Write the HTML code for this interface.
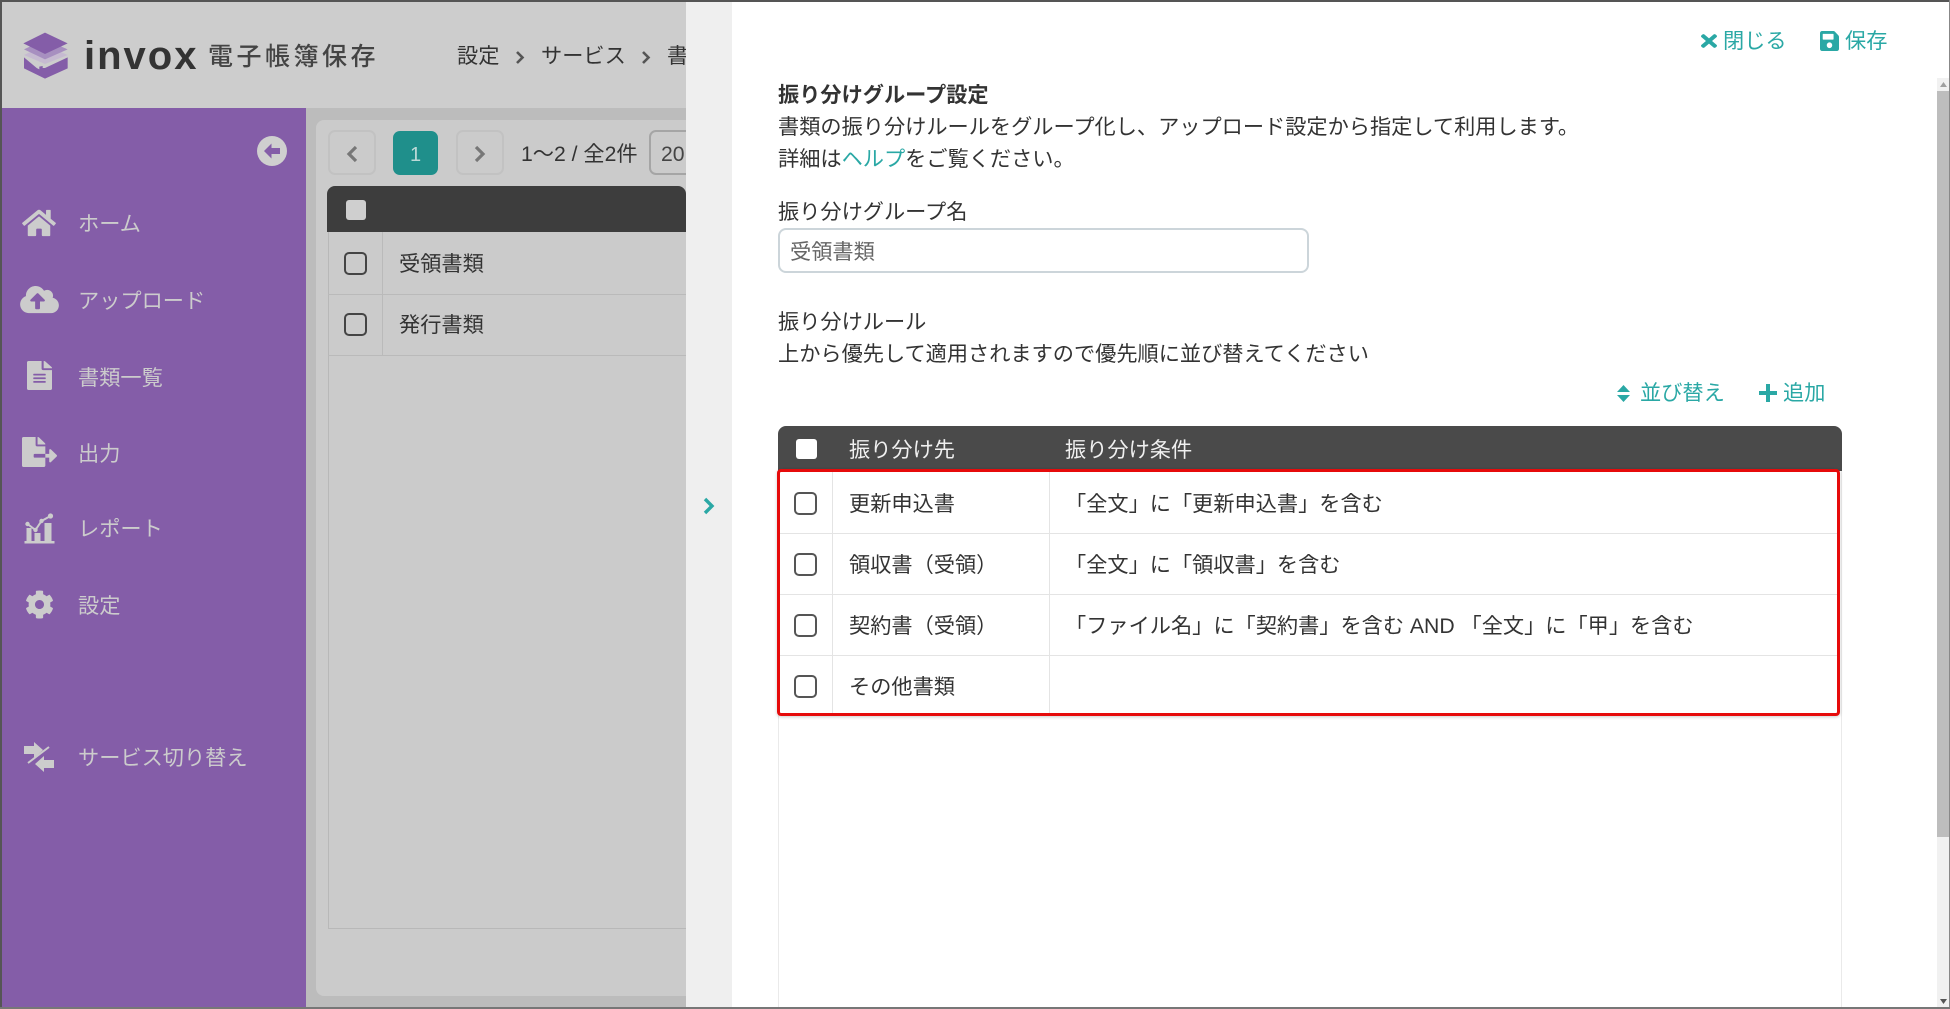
<!DOCTYPE html>
<html lang="ja"><head><meta charset="utf-8"><title>invox</title>
<style>
html,body{margin:0;padding:0;width:1950px;height:1009px;overflow:hidden;background:#fff}
body{position:relative;font-family:"Liberation Sans","Noto Sans CJK JP",sans-serif;font-size:21.2px;color:#333;filter:blur(.3px)}
div,span,svg{position:absolute;display:block}
span.i{position:static;display:inline}
.t{white-space:nowrap;line-height:30px;height:30px;margin-top:1px}
.n{color:#ccc;left:78px;margin-top:2px}
.c{color:#2aa8a5}
.cb{box-sizing:border-box;border:2px solid #555;border-radius:5px;width:23px;height:23px}
.l{background:#e4e4e4}
</style></head><body>
<!-- dim left -->
<div style="left:0;top:0;width:686px;height:108px;background:#cdcdcd"></div>
<div style="left:306px;top:108px;width:380px;height:901px;background:#bcbcbc"></div>
<div style="left:316px;top:120px;width:370px;height:876px;background:#cbcbcb;border-radius:8px 0 0 8px"></div>
<div style="left:0;top:108px;width:306px;height:901px;background:#845da8"></div>

<!-- logo -->
<svg style="left:0;top:0" width="240" height="120" viewBox="0 0 720 360">
<polygon points="72,172 72,205 135,236 203,205 203,172 135,204 128,204 128,198 118,200 118,208 110,204 72,172" fill="#845da8"/>
<polygon points="135,135 203,165 135,192 72,165" fill="#c6bad1"/>
<polygon points="135,118 203,148 135,178 72,148" fill="#a78fc0"/>
<polygon points="135,98 203,130 135,162 70,130" fill="#845da8"/>
</svg>
<div class="t" style="left:84px;top:32px;height:46px;font:bold 40px/46px 'Liberation Sans',sans-serif;letter-spacing:2px;color:#333">invox</div>
<div class="t" style="left:208px;top:41px;font-size:25px;letter-spacing:3.5px;font-weight:500;color:#444">電子帳簿保存</div>
<div class="t" style="left:457px;top:41px;color:#333">設定</div>
<svg style="left:515px;top:50px" width="10" height="15" viewBox="0 0 10 15"><path d="M2 2l5.500 5.500L2 13" fill="none" stroke="#555" stroke-width="2.600"/></svg>
<div class="t" style="left:541px;top:41px;color:#333">サービス</div>
<svg style="left:641px;top:50px" width="10" height="15" viewBox="0 0 10 15"><path d="M2 2l5.500 5.500L2 13" fill="none" stroke="#555" stroke-width="2.600"/></svg>
<div style="left:660px;top:40px;width:26px;height:34px;overflow:hidden"><div class="t" style="left:7px;top:1px;color:#333">書</div></div>

<!-- sidebar -->
<svg style="left:257px;top:136px" width="30" height="30" viewBox="0 0 30 30"><circle cx="15" cy="15" r="15" fill="#cfcfcf"/><path d="M14.500 7.500L7 15l7.500 7.500V18H23v-6h-8.500z" fill="#845da8"/></svg>

<svg style="left:22px;top:208px" width="34" height="30" viewBox="0 0 576 512" fill="#ccc"><path d="M280.37 148.26L96 300.11V464a16 16 0 0 0 16 16l112.06-.29a16 16 0 0 0 15.92-16V368a16 16 0 0 1 16-16h64a16 16 0 0 1 16 16v95.64a16 16 0 0 0 16 16.05L464 480a16 16 0 0 0 16-16V300L295.67 148.26a12.19 12.19 0 0 0-15.3 0zM571.6 251.47L488 182.56V44.05a12 12 0 0 0-12-12h-56a12 12 0 0 0-12 12v72.61L318.47 43a48 48 0 0 0-61 0L4.34 251.47a12 12 0 0 0-1.6 16.9l25.5 31A12 12 0 0 0 45.15 301l235.22-193.74a12.19 12.19 0 0 1 15.3 0L530.9 301a12 12 0 0 0 16.9-1.6l25.5-31a12 12 0 0 0-1.7-16.93z"/></svg>
<div class="t n" style="top:208px">ホーム</div>

<svg style="left:20px;top:284px" width="39" height="31" viewBox="0 0 640 512" fill="#ccc"><path d="M537.6 226.6c4.1-10.7 6.4-22.4 6.4-34.6 0-53-43-96-96-96-19.7 0-38.1 6-53.3 16.2C367 64.2 315.3 32 256 32c-88.4 0-160 71.6-160 160 0 2.7.1 5.4.2 8.1C40.2 219.8 0 273.2 0 336c0 79.5 64.5 144 144 144h368c70.7 0 128-57.3 128-128 0-61.9-44-113.6-102.4-125.4zM393.4 288H328v112c0 8.8-7.2 16-16 16h-48c-8.8 0-16-7.2-16-16V288h-65.4c-14.3 0-21.4-17.2-11.3-27.3l105.400-105.400c6.200-6.200 16.400-6.200 22.600 0l105.400 105.400c10.100 10.100 2.900 27.300-11.300 27.300z"/></svg>
<div class="t n" style="top:285px">アップロード</div>

<svg style="left:27px;top:361px" width="25" height="29" viewBox="0 0 384 512" preserveAspectRatio="none" fill="#ccc"><path d="M224 136V0H24C10.7 0 0 10.7 0 24v464c0 13.3 10.700 24 24 24h336c13.300 0 24-10.700 24-24V160H248c-13.200 0-24-10.800-24-24zm64 236c0 6.600-5.400 12-12 12H108c-6.600 0-12-5.400-12-12v-8c0-6.600 5.400-12 12-12h168c6.600 0 12 5.400 12 12v8zm0-64c0 6.600-5.400 12-12 12H108c-6.600 0-12-5.400-12-12v-8c0-6.600 5.400-12 12-12h168c6.600 0 12 5.400 12 12v8zm0-72v8c0 6.600-5.400 12-12 12H108c-6.600 0-12-5.400-12-12v-8c0-6.600 5.400-12 12-12h168c6.600 0 12 5.400 12 12zm96-114.100v6.100H256V0h6.100c6.400 0 12.500 2.500 17 7l97.900 98c4.500 4.500 7 10.600 7 16.900z"/></svg>
<div class="t n" style="top:362px">書類一覧</div>

<svg style="left:22px;top:437px" width="35" height="30" viewBox="0 0 576 512" preserveAspectRatio="none" fill="#ccc"><path d="M384 121.900c0-6.300-2.500-12.400-7-16.900L279.100 7c-4.500-4.500-10.600-7-17-7H256v128h128zM571 308l-95.700-96.400c-10.100-10.100-27.400-3-27.400 11.300V288h-64v64h64v65.200c0 14.300 17.300 21.400 27.400 11.300L571 332c6.600-6.600 6.600-17.400 0-24zm-379 28v-32c0-8.800 7.200-16 16-16h176V160H248c-13.200 0-24-10.800-24-24V0H24C10.700 0 0 10.700 0 24v464c0 13.300 10.700 24 24 24h336c13.300 0 24-10.700 24-24V352H208c-8.800 0-16-7.200-16-16z"/></svg>
<div class="t n" style="top:438px">出力</div>

<svg style="left:24px;top:513px" width="31" height="31" viewBox="0 0 30 31" fill="#ccc"><rect x="0" y="28" width="30" height="2.500"/><rect x="2" y="15" width="5" height="13"/><rect x="10" y="20" width="6" height="8"/><rect x="20" y="10" width="7" height="18"/><path d="M3 11l8 6 6-9 9-5" fill="none" stroke="#ccc" stroke-width="2"/><circle cx="3" cy="11" r="2.200"/><circle cx="11" cy="17" r="2.200"/><circle cx="17" cy="8" r="2.200"/><circle cx="26" cy="3" r="2.600"/></svg>
<div class="t n" style="top:513px">レポート</div>

<svg style="left:25px;top:590px" width="29" height="29" viewBox="0 0 512 512" fill="#ccc"><path d="M487.4 315.700l-42.600-24.600c4.300-23.200 4.300-47 0-70.200l42.600-24.600c4.900-2.800 7.100-8.600 5.500-14-11.100-35.600-30-67.800-54.700-94.600-3.800-4.100-10-5.100-14.800-2.300L380.800 110c-17.900-15.400-38.500-27.300-60.800-35.100V25.800c0-5.600-3.900-10.500-9.400-11.700-36.700-8.200-74.300-7.800-109.200 0-5.500 1.200-9.400 6.100-9.400 11.700V75c-22.200 7.900-42.800 19.800-60.800 35.100L88.700 85.500c-4.900-2.800-11-1.900-14.800 2.300-24.700 26.700-43.600 58.900-54.700 94.600-1.700 5.400.6 11.200 5.500 14L67.300 221c-4.300 23.200-4.300 47 0 70.200l-42.600 24.600c-4.900 2.800-7.100 8.600-5.500 14 11.100 35.600 30 67.800 54.700 94.600 3.800 4.100 10 5.100 14.800 2.300l42.600-24.600c17.900 15.400 38.500 27.300 60.800 35.100v49.200c0 5.600 3.900 10.500 9.400 11.700 36.700 8.200 74.300 7.800 109.200 0 5.500-1.200 9.400-6.100 9.400-11.700v-49.200c22.200-7.900 42.800-19.800 60.800-35.100l42.600 24.600c4.900 2.800 11 1.900 14.800-2.300 24.700-26.700 43.600-58.900 54.700-94.600 1.500-5.500-.7-11.300-5.600-14.100zM256 336c-44.100 0-80-35.900-80-80s35.900-80 80-80 80 35.900 80 80-35.900 80-80 80z"/></svg>
<div class="t n" style="top:590px">設定</div>

<svg style="left:24px;top:742px" width="30" height="30" viewBox="0 0 30 30" fill="#ccc"><path d="M0 4h10V0l9 8-9 8v-4H0z"/><path d="M30 18H20v-4l-9 8 9 8v-4h10z"/><path d="M4 21L25 5" fill="none" stroke="#ccc" stroke-width="2"/></svg>
<div class="t n" style="top:742px">サービス切り替え</div>

<!-- background list -->
<div style="left:328px;top:130px;width:48px;height:45px;box-sizing:border-box;border:2px solid #c2c2c2;border-radius:7px"></div>
<svg style="left:345px;top:145px" width="14" height="18" viewBox="0 0 14 18"><path d="M11 2L4 9l7 7" fill="none" stroke="#777" stroke-width="3.200"/></svg>
<div style="left:393px;top:131px;width:45px;height:44px;background:#1f8f8b;border-radius:7px;color:#bcd9d7;text-align:center;line-height:48px;font-size:20px">1</div>
<div style="left:456px;top:130px;width:48px;height:45px;box-sizing:border-box;border:2px solid #c2c2c2;border-radius:7px"></div>
<svg style="left:473px;top:145px" width="14" height="18" viewBox="0 0 14 18"><path d="M3 2l7 7-7 7" fill="none" stroke="#777" stroke-width="3.200"/></svg>
<div class="t" style="left:521px;top:139px;color:#333">1〜2 / 全2件</div>
<div style="left:649px;top:130px;width:50px;height:45px;box-sizing:border-box;border:2px solid #a5a5a5;border-radius:7px"></div>
<div class="t" style="left:661px;top:139px;color:#444">20</div>
<div style="left:327px;top:186px;width:359px;height:46px;background:#3d3d3d;border-radius:8px 8px 0 0"></div>
<div style="left:346px;top:200px;width:20px;height:20px;background:#cfcfcf;border-radius:3px"></div>
<div style="left:328px;top:232px;width:1px;height:696px;background:#b8b8b8"></div>
<div style="left:328px;top:928px;width:358px;height:1px;background:#b8b8b8"></div>
<div style="left:328px;top:294px;width:358px;height:1px;background:#bababa"></div>
<div style="left:328px;top:355px;width:358px;height:1px;background:#bababa"></div>
<div style="left:382px;top:232px;width:1px;height:123px;background:#bababa"></div>
<div class="cb" style="left:344px;top:252px;border-color:#444"></div>
<div class="cb" style="left:344px;top:313px;border-color:#444"></div>
<div class="t" style="left:399px;top:249px;color:#333">受領書類</div>
<div class="t" style="left:399px;top:310px;color:#333">発行書類</div>

<!-- right panel -->
<div style="left:686px;top:0;width:46px;height:1009px;background:#efefef"></div>
<div style="left:732px;top:0;width:1218px;height:1009px;background:#fff"></div>
<svg style="left:702px;top:497px" width="14" height="18" viewBox="0 0 14 18"><path d="M3 2l7 7-7 7" fill="none" stroke="#2aa8a5" stroke-width="3.400"/></svg>

<svg style="left:1701px;top:31px" width="16" height="20" viewBox="0 0 352 512" fill="#2aa8a5" preserveAspectRatio="none"><path d="M242.720 256l100.070-100.070c12.280-12.280 12.280-32.190 0-44.480l-22.240-22.240c-12.280-12.280-32.190-12.280-44.480 0L176 189.280 75.930 89.210c-12.280-12.280-32.190-12.280-44.480 0L9.210 111.450c-12.280 12.280-12.280 32.190 0 44.480L109.280 256 9.210 356.070c-12.280 12.280-12.280 32.190 0 44.480l22.240 22.240c12.280 12.280 32.200 12.280 44.480 0L176 322.720l100.070 100.070c12.280 12.280 32.200 12.280 44.480 0l22.240-22.240c12.280-12.280 12.280-32.190 0-44.480L242.720 256z"/></svg>
<div class="t c" style="left:1723px;top:26px">閉じる</div>
<svg style="left:1820px;top:31px" width="19" height="20" viewBox="0 32 448 448" fill="#2aa8a5" preserveAspectRatio="none"><path d="M433.941 129.941l-83.882-83.882A48 48 0 0 0 316.118 32H48C21.490 32 0 53.490 0 80v352c0 26.510 21.490 48 48 48h352c26.510 0 48-21.490 48-48V163.882a48 48 0 0 0-14.059-33.941zM224 416c-35.346 0-64-28.654-64-64 0-35.346 28.654-64 64-64s64 28.654 64 64c0 35.346-28.654 64-64 64zm96-304.520V212c0 6.627-5.373 12-12 12H76c-6.627 0-12-5.373-12-12V108c0-6.627 5.373-12 12-12h228.520c3.183 0 6.235 1.264 8.485 3.515l3.480 3.480A11.996 11.996 0 0 1 320 111.480z"/></svg>
<div class="t c" style="left:1845px;top:26px">保存</div>

<div class="t" style="left:778px;top:80px;font-weight:bold;color:#333">振り分けグループ設定</div>
<div class="t" style="left:778px;top:112px;color:#333">書類の振り分けルールをグループ化し、アップロード設定から指定して利用します。</div>
<div class="t" style="left:778px;top:144px;color:#333">詳細は<span class="i" style="color:#2aa8a5">ヘルプ</span>をご覧ください。</div>
<div class="t" style="left:778px;top:197px;color:#333">振り分けグループ名</div>
<div style="left:778px;top:228px;width:531px;height:45px;box-sizing:border-box;border:2px solid #ccd5da;border-radius:8px;background:#fff"></div>
<div class="t" style="left:790px;top:237px;color:#666">受領書類</div>
<div class="t" style="left:778px;top:307px;color:#333">振り分けルール</div>
<div class="t" style="left:778px;top:339px;color:#333">上から優先して適用されますので優先順に並び替えてください</div>

<svg style="left:1617px;top:385px" width="13" height="17" viewBox="0 0 13 17" fill="#2aa8a5"><path d="M6.500 0L13 7H0z"/><path d="M6.500 17L13 10H0z"/></svg>
<div class="t c" style="left:1640px;top:378px">並び替え</div>
<svg style="left:1759px;top:384px" width="18" height="18" viewBox="0 0 18 18" fill="#2aa8a5"><path d="M7 0h4v7h7v4h-7v7H7v-7H0V7h7z"/></svg>
<div class="t c" style="left:1783px;top:378px">追加</div>

<!-- rule table -->
<div style="left:778px;top:470px;width:1px;height:539px;background:#eaeaea"></div>
<div style="left:1841px;top:470px;width:1px;height:539px;background:#eaeaea"></div>
<div style="left:778px;top:426px;width:1064px;height:45px;background:#4a4a4a;border-radius:8px 8px 0 0"></div>
<div style="left:796px;top:439px;width:21px;height:20px;background:#fff;border-radius:3px"></div>
<div class="t" style="left:849px;top:435px;color:#f0f0f0">振り分け先</div>
<div class="t" style="left:1065px;top:435px;color:#f0f0f0">振り分け条件</div>

<div class="l" style="left:779px;top:533px;width:1060px;height:1px"></div>
<div class="l" style="left:779px;top:594px;width:1060px;height:1px"></div>
<div class="l" style="left:779px;top:655px;width:1060px;height:1px"></div>
<div class="l" style="left:832px;top:472px;width:1px;height:242px"></div>
<div class="l" style="left:1049px;top:472px;width:1px;height:242px"></div>

<div class="cb" style="left:794px;top:492px"></div>
<div class="cb" style="left:794px;top:553px"></div>
<div class="cb" style="left:794px;top:614px"></div>
<div class="cb" style="left:794px;top:675px"></div>

<div class="t" style="left:849px;top:489px">更新申込書</div>
<div class="t" style="left:849px;top:550px">領収書（受領）</div>
<div class="t" style="left:849px;top:611px">契約書（受領）</div>
<div class="t" style="left:849px;top:672px">その他書類</div>
<div class="t" style="left:1065px;top:489px">「全文」に「更新申込書」を含む</div>
<div class="t" style="left:1065px;top:550px">「全文」に「領収書」を含む</div>
<div class="t" style="left:1065px;top:611px">「ファイル名」に「契約書」を含む AND 「全文」に「甲」を含む</div>

<div style="left:777px;top:469px;width:1063px;height:247px;box-sizing:border-box;border:3px solid #e60b0b;border-radius:4px;box-shadow:0 1px 3px rgba(0,0,0,.2)"></div>

<!-- scrollbar -->
<div style="left:1937px;top:78px;width:12px;height:931px;background:#f1f1f1"></div>
<div style="left:1937px;top:91px;width:12px;height:746px;background:#bdbdbd"></div>
<svg style="left:1940px;top:82px" width="7" height="5" viewBox="0 0 7 5"><path d="M3.500 0L7 5H0z" fill="#a0a0a0"/></svg>
<svg style="left:1940px;top:999px" width="7" height="5" viewBox="0 0 7 5"><path d="M3.500 5L7 0H0z" fill="#555"/></svg>

<!-- outer frame -->
<div style="left:0;top:0;width:1950px;height:2px;background:#555"></div>
<div style="left:0;top:0;width:1.500px;height:1009px;background:#555"></div>
<div style="left:1949px;top:0;width:1px;height:1009px;background:#888"></div>
<div style="left:0;top:1007px;width:1950px;height:2px;background:#777"></div>
</body></html>
